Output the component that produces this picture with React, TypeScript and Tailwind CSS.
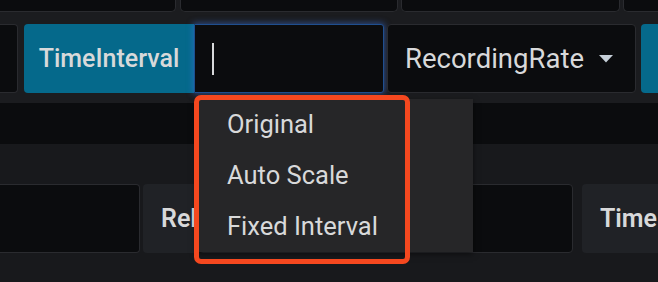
const labelCls =
  "flex h-full shrink-0 items-center px-[18px] text-[25px] font-medium text-[#d8d9da] whitespace-nowrap";
const inputCls = "h-full shrink-0 bg-[#0b0c0e] border border-[#2a2b2f]";

const Caret = () => (
  <svg width="14" height="8" viewBox="0 0 14 8" className="shrink-0">
    <path d="M0 0 L14 0 L7 7.5 Z" fill="#c7d0d9" />
  </svg>
);

const Menu = () => {
  const items = ["Original", "Auto Scale", "Fixed Interval"];
  return (
    <div className="absolute left-[196px] top-[99px] w-[277px] bg-[#262628] shadow-[0_2px_6px_rgba(0,0,0,0.5)]">
      {items.map((it) => (
        <div key={it} className="flex h-[51px] items-center pl-[31px] text-[25.5px] text-[#d8d9da] whitespace-nowrap">
          {it}
        </div>
      ))}
    </div>
  );
};

export default function App() {
  return (
    <div className="relative h-[282px] w-[658px] overflow-hidden bg-[#18191c] font-['Roboto',sans-serif]">
      <div className="h-[103px] bg-[#1b1c1f]">
        {/* top row, cut off by the window */}
        <div className="flex h-[12px] gap-[3px]">
          <div className="w-[176px] shrink-0 rounded-br-[5px] border-b border-r border-[#2a2b2f] bg-[#0b0c0e]" />
          <div className="ml-[1px] w-[218px] shrink-0 rounded-b-[5px] border-x border-b border-[#2a2b2f] bg-[#0b0c0e]" />
          <div className="w-[219px] shrink-0 rounded-b-[5px] border-x border-b border-[#2a2b2f] bg-[#0b0c0e]" />
          <div className="w-[60px] shrink-0 rounded-bl-[5px] border-b border-l border-[#2a2b2f] bg-[#0b0c0e]" />
        </div>

        <div className="mt-[12px] flex h-[69px]">
          <div className={`${inputCls} w-[18px] rounded-r-[4px] border-l-0`} />
          <div className={`${labelCls} ml-[6px] w-[170px] justify-center rounded-l-[4px] bg-[#05698b]`}>
            TimeInterval
          </div>
          <div className="flex h-full w-[190px] shrink-0 items-center rounded-r-[3px] border border-[#1f4f8f] bg-[#0b0c0e] pl-[17px] shadow-[0_0_6px_1px_rgba(61,113,217,0.55)]">
            <div className="h-[32px] w-[2px] bg-[#d8d9da]" />
          </div>
          <div className={`${inputCls} ml-[3px] flex w-[249px] items-center gap-[15px] rounded-[4px] pl-[17px]`}>
            <span className="text-[27.5px] text-[#d8d9da] whitespace-nowrap">RecordingRate</span>
            <Caret />
          </div>
          <div className="ml-[5px] h-full w-[40px] shrink-0 rounded-l-[4px] bg-[#05698b]" />
        </div>
      </div>

      <div className="h-[41px] bg-[#0b0c0e]" />

      <div className="mt-[40px] flex h-[69px]">
        <div className={`${inputCls} w-[140px] rounded-r-[4px] border-l-0`} />
        <div className={`${labelCls} ml-[3px] w-[53px] overflow-hidden rounded-l-[4px] bg-[#202226] font-semibold`}>
          Rel
        </div>
        <div className={`${inputCls} ml-[3px] w-[374px] rounded-[4px]`} />
        <div className={`${labelCls} ml-[9px] w-[90px] rounded-l-[4px] bg-[#202226] font-semibold`}>
          Time
        </div>
      </div>

      <Menu />
      <div className="absolute left-[194px] top-[95px] h-[169px] w-[216px] rounded-[7px] border-[5px] border-[#f5481f]" />
    </div>
  );
}
